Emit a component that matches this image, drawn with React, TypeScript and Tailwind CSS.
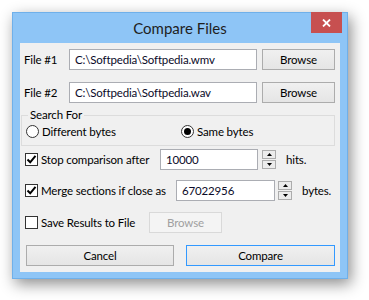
import type { ReactNode } from 'react'

const FONT = "font-['Lato',sans-serif]"

function Button({ children, className = '', disabled = false, primary = false }: {
  children: ReactNode
  className?: string
  disabled?: boolean
  primary?: boolean
}) {
  const border = disabled ? 'border-[#d9d9d9] text-[#a0a0a0] bg-[#f4f4f4]' : primary ? 'border-[#3399ff] text-black bg-gradient-to-b from-[#f0f0f0] to-[#e5e5e5]' : 'border-[#acacac] text-black bg-gradient-to-b from-[#f0f0f0] to-[#e5e5e5]'
  return (
    <div className={`flex h-[21px] shrink-0 items-center justify-center border ${border} ${className}`}>
      {children}
    </div>
  )
}

function TextBox({ value, className = '' }: { value: string; className?: string }) {
  return (
    <div className={`flex h-[21px] shrink-0 items-center border border-[#abadb3] bg-white pl-[5px] text-[#0a0a28] ${className}`}>
      {value}
    </div>
  )
}

function CheckBox({ checked }: { checked: boolean }) {
  return (
    <div className="flex h-[13px] w-[13px] shrink-0 items-center justify-center border border-[#333] bg-white">
      {checked && (
        <svg width="11" height="11" viewBox="0 0 11 11">
          <path d="M1.5 5.5 L4.2 8.3 L9.5 1.8" fill="none" stroke="#000" strokeWidth="2" />
        </svg>
      )}
    </div>
  )
}

function Radio({ checked }: { checked: boolean }) {
  return (
    <div className="flex h-[13px] w-[13px] shrink-0 items-center justify-center rounded-full border border-[#333] bg-white">
      {checked && <div className="h-[7px] w-[7px] rounded-full bg-black" />}
    </div>
  )
}

function Spinner({ className = '' }: { className?: string }) {
  return (
    <div className={`flex w-[14px] shrink-0 flex-col gap-[1px] ${className}`}>
      <div className="flex h-[9px] items-center justify-center border border-[#acacac] bg-[#ececec]">
        <svg width="5" height="3" viewBox="0 0 5 3"><path d="M2.5 0 L5 3 L0 3 Z" fill="#000" /></svg>
      </div>
      <div className="flex h-[9px] items-center justify-center border border-[#acacac] bg-[#ececec]">
        <svg width="5" height="3" viewBox="0 0 5 3"><path d="M0 0 L5 0 L2.5 3 Z" fill="#000" /></svg>
      </div>
    </div>
  )
}

export default function App() {
  return (
    <div className={`h-[300px] w-[369px] bg-white pl-[12px] pt-[12px] ${FONT}`}>
      <div className="flex h-[267px] w-[336px] flex-col border border-[#6fb0ea] bg-[#8ec5f6] shadow-[3px_5px_14px_rgba(0,0,0,0.45)]">
        <div className="relative flex h-[30px] shrink-0 items-center justify-center">
          <span className="text-[15px] text-[#1e1e1e]">Compare Files</span>
          <div className="absolute right-[5px] top-[-1px] flex h-[21px] w-[31px] items-center justify-center bg-[#c75050]">
            <svg width="9" height="8" viewBox="0 0 9 8">
              <path d="M1 0.5 L8 7.5 M8 0.5 L1 7.5" stroke="#fff" strokeWidth="1.8" />
            </svg>
          </div>
        </div>
        <div className="mx-[7px] mb-[6px] flex flex-1 flex-col whitespace-nowrap bg-[#f0f0f0] text-[11.5px] tracking-[-0.15px] text-black">
          <div className="mt-[6px] flex h-[21px] items-center">
            <span className="w-[49px] shrink-0 pl-[4px]">File #1</span>
            <TextBox value="C:\Softpedia\Softpedia.wmv" className="w-[188px]" />
            <Button className="ml-[5px] w-[73px]">Browse</Button>
          </div>
          <div className="mt-[12px] flex h-[21px] items-center">
            <span className="w-[49px] shrink-0 pl-[4px]">File #2</span>
            <TextBox value="C:\Softpedia\Softpedia.wav" className="w-[188px]" />
            <Button className="ml-[5px] w-[73px]">Browse</Button>
          </div>
          <div className="relative ml-[1px] mr-[5px] mt-[12px] flex h-[31px] items-center border border-[#dcdcdc] pt-[2px]">
            <span className="absolute left-[6px] top-[-9px] bg-[#f0f0f0] px-[2px] leading-[16px]">Search For</span>
            <div className="flex w-[159px] shrink-0 items-center gap-[3px] pl-[4px]">
              <Radio checked={false} />
              <span>Different bytes</span>
            </div>
            <div className="flex items-center gap-[3px]">
              <Radio checked />
              <span>Same bytes</span>
            </div>
          </div>
          <div className="mt-[3px] flex h-[21px] items-center">
            <div className="flex w-[140px] shrink-0 items-center gap-[3px] pl-[5px]">
              <CheckBox checked />
              <span>Stop comparison after</span>
            </div>
            <TextBox value="10000" className="w-[98px]" />
            <Spinner className="ml-[4px]" />
            <span className="ml-[10px]">hits.</span>
          </div>
          <div className="mt-[10px] flex h-[21px] items-center">
            <div className="flex w-[156px] shrink-0 items-center gap-[3px] pl-[5px]">
              <CheckBox checked />
              <span>Merge sections if close as</span>
            </div>
            <TextBox value="67022956" className="w-[99px]" />
            <Spinner className="ml-[3px]" />
            <span className="ml-[10px]">bytes.</span>
          </div>
          <div className="mt-[11px] flex h-[21px] items-center">
            <div className="flex w-[129px] shrink-0 items-center gap-[3px] pl-[5px]">
              <CheckBox checked={false} />
              <span>Save Results to File</span>
            </div>
            <Button disabled className="w-[73px]">Browse</Button>
          </div>
          <div className="mt-[12px] flex h-[21px] items-center">
            <Button className="ml-[6px] w-[148px]">Cancel</Button>
            <Button primary className="ml-[12px] w-[149px]">Compare</Button>
          </div>
        </div>
      </div>
    </div>
  )
}
